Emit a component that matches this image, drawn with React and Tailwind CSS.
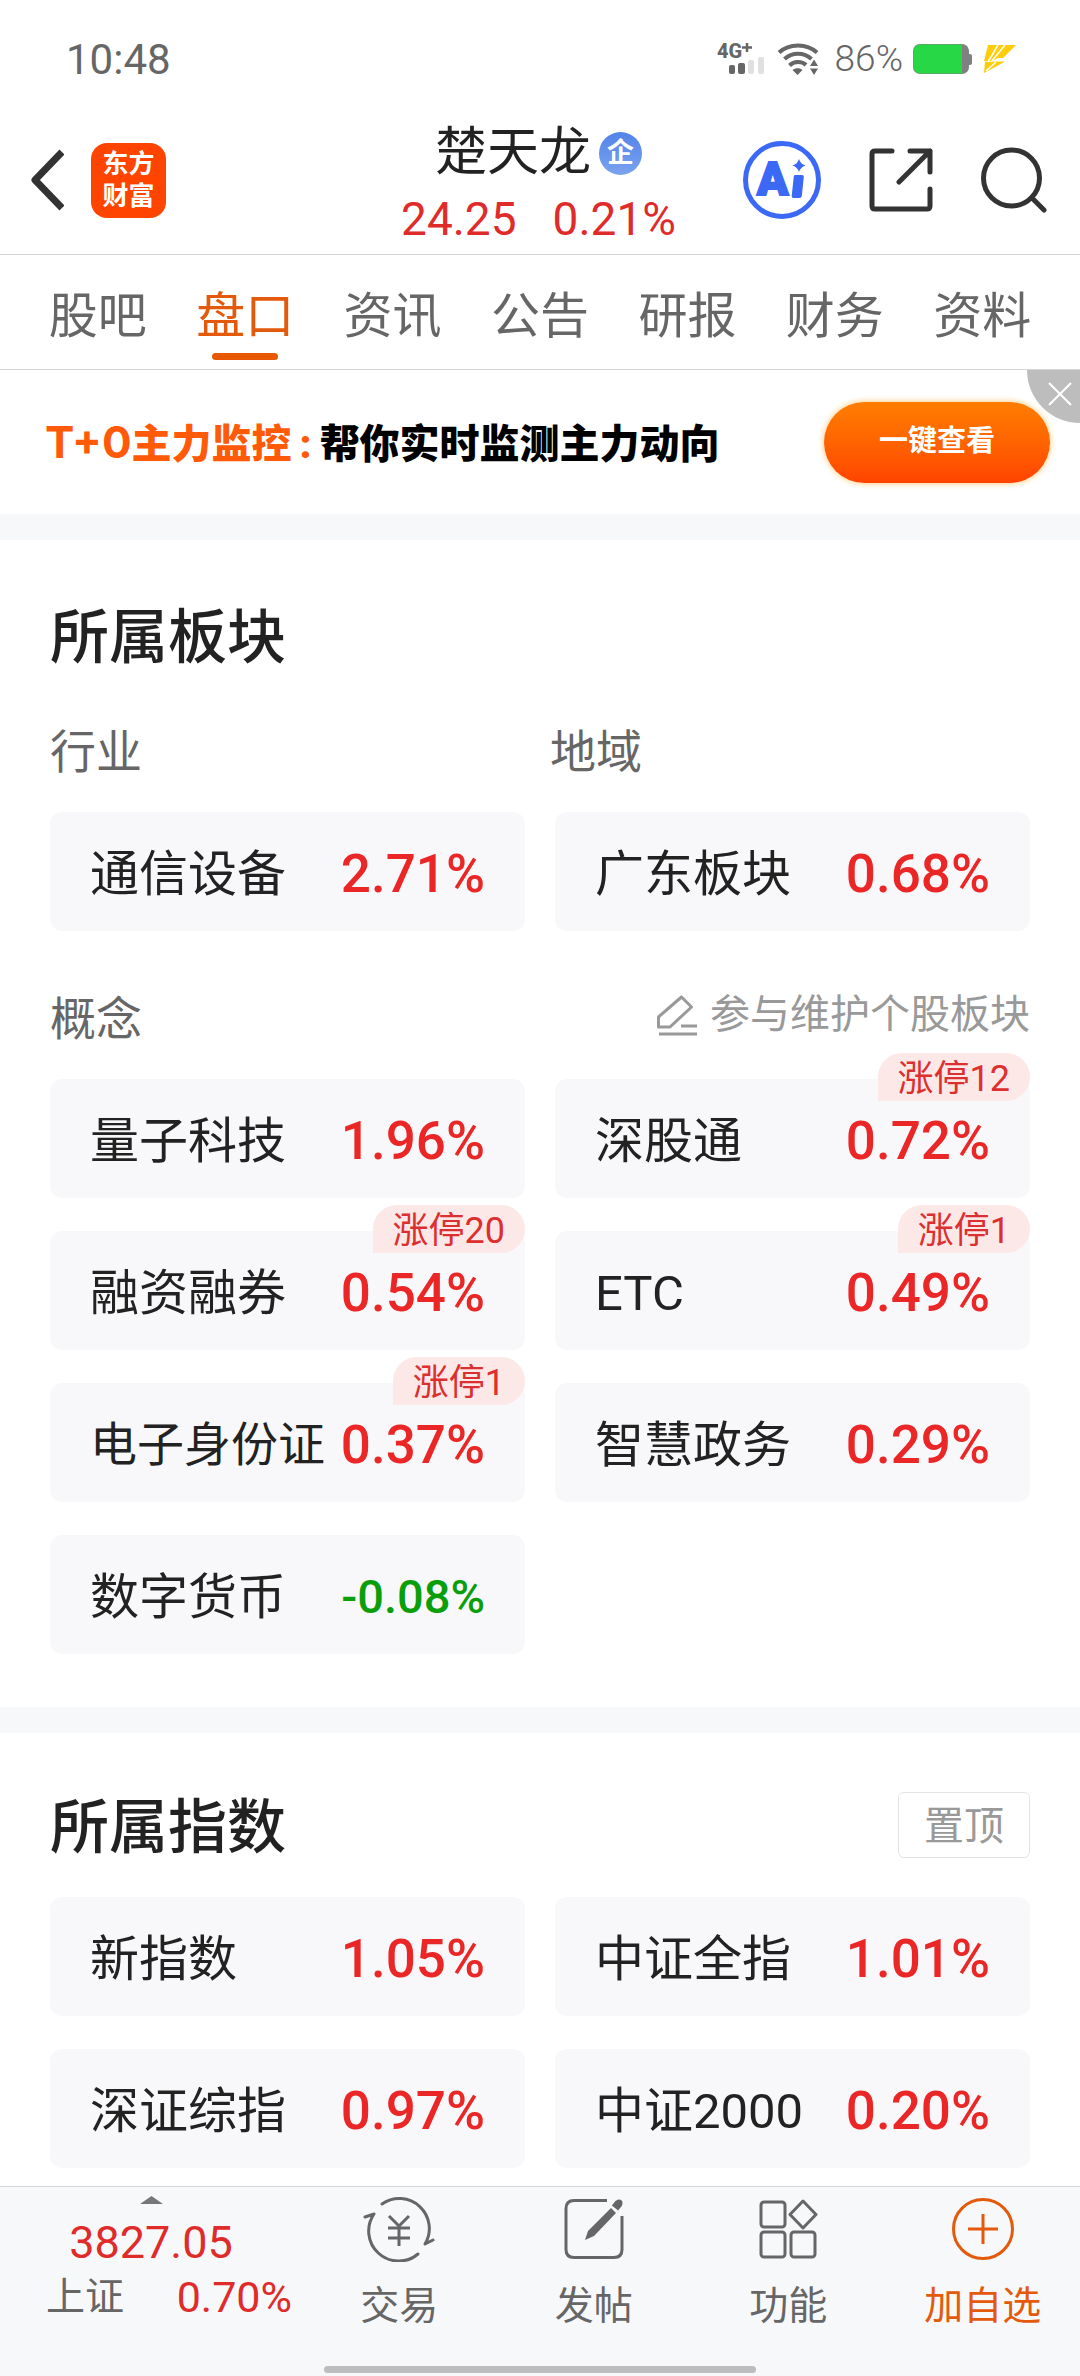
import clsx from 'clsx';

const TABS = ['股吧', '盘口', '资讯', '公告', '研报', '财务', '资料'];

const CONCEPTS = [
    { name: '量子科技', change: 1.96 },
    { name: '深股通', change: 0.72, limitUp: 12 },
    { name: '融资融券', change: 0.54, limitUp: 20 },
    { name: 'ETC', change: 0.49, limitUp: 1 },
    { name: '电子身份证', change: 0.37, limitUp: 1 },
    { name: '智慧政务', change: 0.29 },
    { name: '数字货币', change: -0.08 },
];

const INDEXES = [
    { name: '新指数', change: 1.05 },
    { name: '中证全指', change: 1.01 },
    { name: '深证综指', change: 0.97 },
    { name: '中证2000', change: 0.2 },
];

function StatusBar() {
    return (
        <div className="flex h-[106px] items-center justify-between pt-3 pl-[66px] pr-[63px] text-[#666]">
            <span className="text-[42px]">10:48</span>
            <div className="flex items-center">
                <svg className="h-[46px] w-12" viewBox="0 -6 48 46" fill="#666">
                    <text x="0" y="16" fontSize="20" fontWeight="800" fontFamily="Roboto">4G</text>
                    <path d="M25 5.500h10M30 1v9" stroke="#666" strokeWidth="2.500" />
                    <rect x="12" y="23" width="6" height="9" rx="2" />
                    <rect x="21" y="21" width="7" height="11" rx="2" />
                    <rect x="31" y="18" width="6" height="14" rx="2" fill="#e0e0e0" />
                    <rect x="41" y="15" width="6" height="17" rx="2" fill="#e0e0e0" />
                </svg>
                <svg className="ml-3 h-[34px] w-[42px]" viewBox="0 0 42 34" fill="none" stroke="#666" strokeWidth="4">
                    <path d="M2 10.500C12 1 30 1 40 10.500" />
                    <path d="M7.500 17C15 10 27 10 34.500 17" />
                    <path d="M12.500 23.500C17 19 25 19 29 23" />
                    <path d="M15.500 28C18.500 25.500 23 25.500 25.500 28L20.500 33z" fill="#666" stroke="none" />
                    <path d="M37 17.500l4 6.500h-8zM37 33l4-6.500h-8z" fill="#666" stroke="none" />
                </svg>
                <span className="ml-4 text-[37px] font-light">86%</span>
                <svg className="ml-2.5 h-[30px] w-[60px]" viewBox="0 0 60 30">
                    <rect x="0" y="0" width="56" height="30" rx="7" fill="#808080" />
                    <rect x="54" y="10" width="5" height="11" rx="2" fill="#808080" />
                    <path d="M7 .5h42v29H7a6.500 6.500 0 0 1-6.500-6.500V7A6.500 6.500 0 0 1 7 .5z" fill="#28d745" />
                </svg>
                <svg className="ml-2.5 h-7 w-[34px]" viewBox="0 0 34 28" fill="#ffcc0a">
                    <path d="M5 0H33L20 13H15L9 16H1z" />
                    <path d="M2 16.500H22L14 21 1 28z" />
                    <path d="M15 0L5 17M22 0L8 17M13 17L3 26" stroke="#fff" strokeWidth="1.500" />
                </svg>
            </div>
        </div>
    );
}

function Header() {
    return (
        <header className="grid h-[149px] grid-cols-[1fr_auto_1fr] items-center border-b border-[#d6d6d6] pr-[33px] pl-[30px]">
            <div className="flex items-center gap-[27px]">
                <button type="button" aria-label="返回">
                    <svg className="h-[62px] w-[34px]" viewBox="0 0 34 62" fill="none" stroke="#333" strokeWidth="7">
                        <path d="M32 3L5 31l27 28" strokeLinejoin="round" />
                    </svg>
                </button>
                <div className="flex size-[75px] flex-col justify-center rounded-2xl bg-[#ff4400] text-center text-[26px] leading-8 font-bold text-white">
                    <span>东方</span>
                    <span>财富</span>
                </div>
            </div>
            <div className="flex flex-col items-center pt-3">
                <h1 className="flex items-center gap-2 text-[52px] leading-[66px] text-[#222]">
                    楚天龙
                    <span className="flex size-[43px] items-center justify-center rounded-full bg-linear-to-b from-[#5283e8] to-[#7ba3ee] text-[27px] leading-none font-bold text-white">
                        企
                    </span>
                </h1>
                <p className="flex gap-9 text-[46px] leading-[66px] text-[#e02b2b]">
                    <span>24.25</span>
                    <span>0.21%</span>
                </p>
            </div>
            <div className="flex items-center justify-end gap-12">
                <button type="button" aria-label="AI助手">
                    <svg className="size-[78px]" viewBox="0 0 78 78">
                        <circle cx="39" cy="39" r="36.500" fill="none" stroke="#3b68f5" strokeWidth="5" />
                        <text x="14" y="54" fontSize="46" fontWeight="900" fontFamily="Roboto" fill="#3b68f5" stroke="#3b68f5" strokeWidth="2">A</text>
                        <path d="M51 34h8q2 0 1.800 2l-2 19q-.3 2-2.300 2h-6q-2 0-1.800-2l2-19q.2-2 1.300-2z" fill="#3b68f5" />
                        <path d="M56 18q1.500 5 6.500 6.500q-5 1.500-6.500 6.500q-1.500-5-6.500-6.500q5-1.500 6.500-6.500z" fill="#3b68f5" />
                    </svg>
                </button>
                <button type="button" aria-label="分享">
                    <svg className="size-16" viewBox="0 0 64 64" fill="none" stroke="#333" strokeWidth="5" strokeLinecap="round" strokeLinejoin="round">
                        <path d="M23 3H6Q3 3 3 6v52q0 3 3 3h52q3 0 3-3V41" />
                        <path d="M41 3h20v21M61 3L30 34" />
                    </svg>
                </button>
                <button type="button" aria-label="搜索">
                    <svg className="size-[66px]" viewBox="0 0 66 66" fill="none" stroke="#333" strokeWidth="5" strokeLinecap="round">
                        <circle cx="30.500" cy="31" r="28" />
                        <path d="M51 51l12 12" />
                    </svg>
                </button>
            </div>
        </header>
    );
}

function TabBar() {
    return (
        <nav className="flex h-[115px] border-b border-[#d6d6d6] px-6">
            {TABS.map((tab) => {
                const active = tab === '盘口';
                return (
                    <a
                        key={tab}
                        href="#"
                        className={clsx(
                            'relative flex flex-1 items-center justify-center pt-2 text-[49px] leading-none',
                            active ? 'text-[#e35a0c]' : 'text-[#666]'
                        )}
                    >
                        {tab}
                        {active && (
                            <span className="absolute bottom-[9px] left-1/2 h-[7px] w-[66px] -translate-x-1/2 rounded-full bg-[#e85800]" />
                        )}
                    </a>
                );
            })}
        </nav>
    );
}

function Banner() {
    return (
        <div className="relative flex h-36 items-center justify-between pr-[30px] pl-[45px]">
            <p className="flex items-baseline gap-2 text-[40px] leading-none font-black">
                <span className="text-[#ff5a08]">
                    <span className="font-['Inter'] text-[44px] leading-none font-bold">T+0</span>
                    主力监控
                </span>
                <span className="text-[#ff5a08]">:</span>
                <span className="text-black">帮你实时监测主力动向</span>
            </p>
            <button
                type="button"
                className="h-[81px] w-[226px] rounded-full bg-linear-to-b from-[#ff7d00] to-[#ff4300] text-[29px] font-bold text-white shadow-[0_0_6px_#ffc266]"
            >
                一键查看
            </button>
            <button
                type="button"
                aria-label="关闭"
                className="absolute top-0 right-0 flex size-[53px] items-center justify-center rounded-bl-full bg-[#bdbdbd] pb-1.5 pl-3"
            >
                <svg className="size-6" viewBox="0 0 24 24" stroke="#fff" strokeWidth="2">
                    <path d="M1 1l22 22M23 1L1 23" />
                </svg>
            </button>
        </div>
    );
}

function BoardCard({ name, change, limitUp }) {
    const down = change < 0;
    return (
        <a href="#" className="relative flex h-[119px] items-center justify-between rounded-xl bg-[#f8f8fa] px-10 pt-1.5">
            <span className={clsx('whitespace-nowrap text-[#222]', name.length === 5 ? 'text-[47px]' : 'text-[49px]')}>
                {name}
            </span>
            <span className={clsx('font-medium', down ? 'text-[47px] text-[#0a9f0a]' : 'text-[53px] text-[#ea2626]')}>
                {change.toFixed(2)}%
            </span>
            {limitUp && (
                <span className="absolute -top-[26px] right-0 flex h-12 items-center rounded-3xl rounded-bl-none bg-[#fde8e8] px-5 pt-1 text-[36px] leading-none text-[#dc2f2f]">
                    涨停{limitUp}
                </span>
            )}
        </a>
    );
}

function BoardGrid({ items }) {
    return (
        <div className="mt-[35px] grid grid-cols-2 gap-x-[30px] gap-y-[33px]">
            {items.map((item) => (
                <BoardCard key={item.name} {...item} />
            ))}
        </div>
    );
}

function Boards() {
    return (
        <section className="px-[50px] pt-[62px] pb-[53px]">
            <h2 className="pt-1.5 text-[59px] leading-[60px] font-medium text-[#222]">所属板块</h2>
            <div className="mt-[59px] grid grid-cols-2 gap-5 text-[46px] leading-[50px] text-[#666]">
                <h3>行业</h3>
                <h3>地域</h3>
            </div>
            <BoardGrid items={[{ name: '通信设备', change: 2.71 }, { name: '广东板块', change: 0.68 }]} />
            <div className="mt-[63px] flex items-start justify-between">
                <h3 className="text-[46px] leading-[50px] text-[#666]">概念</h3>
                <a href="#" className="flex items-center gap-3 text-[40px] leading-9 text-[#999]">
                    <svg className="size-[42px]" viewBox="0 0 42 42" fill="none" stroke="#999" strokeWidth="3">
                        <path d="M25.500 3l10 10L14 33H2.500V23z" strokeLinejoin="round" />
                        <path d="M25 32h16M3 40h38" />
                    </svg>
                    参与维护个股板块
                </a>
            </div>
            <BoardGrid items={CONCEPTS} />
        </section>
    );
}

function Indexes() {
    return (
        <section className="px-[50px] pt-[59px] pb-[18px]">
            <div className="flex items-center justify-between pb-1">
                <h2 className="pt-1.5 text-[59px] leading-[60px] font-medium text-[#222]">所属指数</h2>
                <button type="button" className="h-[66px] w-[132px] rounded-md border border-[#e3e3e3] pt-1 text-[40px] leading-none text-[#999]">
                    置顶
                </button>
            </div>
            <BoardGrid items={INDEXES} />
        </section>
    );
}

function TradeIcon() {
    return (
        <svg className="h-[66px] w-[72px]" viewBox="0 0 72 66" fill="none" stroke="#666" strokeWidth="3" strokeLinecap="round" strokeLinejoin="round">
            <path d="M19 8A30 30 0 0 1 62 48l8-4" />
            <path d="M55 58A30 30 0 0 1 11 18l-9 3" />
            <path d="M26 20l10 10 10-10M36 30v20M25 32h22M25 42h22" strokeLinecap="butt" />
        </svg>
    );
}

function PostIcon() {
    return (
        <svg className="h-[66px] w-[62px]" viewBox="0 0 62 66" fill="none" stroke="#666" strokeWidth="3">
            <path d="M44 4.500H11Q3 4.500 3 12.500v41q0 8 8 8h40q8 0 8-8V20" />
            <path d="M48 12l5 5-22 23-9 4 3-9z" fill="#666" stroke="none" />
            <path d="M52 12l4-5" strokeWidth="8" strokeLinecap="butt" />
            <circle cx="56" cy="7" r="3.500" fill="#666" stroke="none" />
        </svg>
    );
}

function FeatureIcon() {
    return (
        <svg className="h-[66px] w-[60px]" viewBox="0 0 60 66" fill="none" stroke="#666" strokeWidth="3">
            <rect x="3" y="6" width="24" height="25" rx="3" />
            <rect x="3" y="36" width="24" height="25" rx="3" />
            <rect x="33" y="36" width="24" height="25" rx="3" />
            <path d="M45 5l13 13.500L45 32 32 18.500z" strokeLinejoin="round" />
        </svg>
    );
}

function AddIcon() {
    return (
        <svg className="size-[66px]" viewBox="0 0 66 66" fill="none" stroke="#e35a0c" strokeWidth="3">
            <circle cx="33" cy="33" r="29.500" />
            <path d="M18 33h30M33 18v30" />
        </svg>
    );
}

const ACTIONS = [
    { label: '交易', Icon: TradeIcon },
    { label: '发帖', Icon: PostIcon },
    { label: '功能', Icon: FeatureIcon },
    { label: '加自选', Icon: AddIcon, highlight: true },
];

function BottomBar() {
    return (
        <footer className="mt-auto border-t border-[#d6d6d6] bg-[#f7f8fa]">
            <div className="flex h-[179px]">
                <a href="#" className="flex w-[302px] flex-col items-center pt-[9px]">
                    <svg className="h-2 w-[23px]" viewBox="0 0 23 8" fill="#777">
                        <path d="M11.500 0L23 8H0z" />
                    </svg>
                    <span className="mt-3 text-[45px] leading-[54px] text-[#e02b2b]">3827.05</span>
                    <span className="flex w-full items-center justify-between pr-2.5 pl-[46px] leading-[54px]">
                        <span className="text-[39px] text-[#666]">上证</span>
                        <span className="text-[43px] text-[#e02b2b]">0.70%</span>
                    </span>
                </a>
                {ACTIONS.map(({ label, Icon, highlight }) => (
                    <button
                        key={label}
                        type="button"
                        className={clsx(
                            'flex flex-1 flex-col items-center pt-[9px] text-[39px] leading-[52px]',
                            highlight ? 'text-[#e35a0c]' : 'text-[#666]'
                        )}
                    >
                        <Icon />
                        <span className="mt-[18px]">{label}</span>
                    </button>
                ))}
            </div>
            <div className="mx-auto mb-[3px] h-[7px] w-2/5 rounded-full bg-[#bbbdbf]" />
        </footer>
    );
}

export default function App() {
    return (
        <div className="flex min-h-screen flex-col bg-white font-['Roboto','Noto_Sans_CJK_SC',sans-serif]">
            <StatusBar />
            <Header />
            <TabBar />
            <Banner />
            <div className="h-[26px] bg-[#f7f8fa]" />
            <Boards />
            <div className="h-[26px] bg-[#f7f8fa]" />
            <Indexes />
            <BottomBar />
        </div>
    );
}
